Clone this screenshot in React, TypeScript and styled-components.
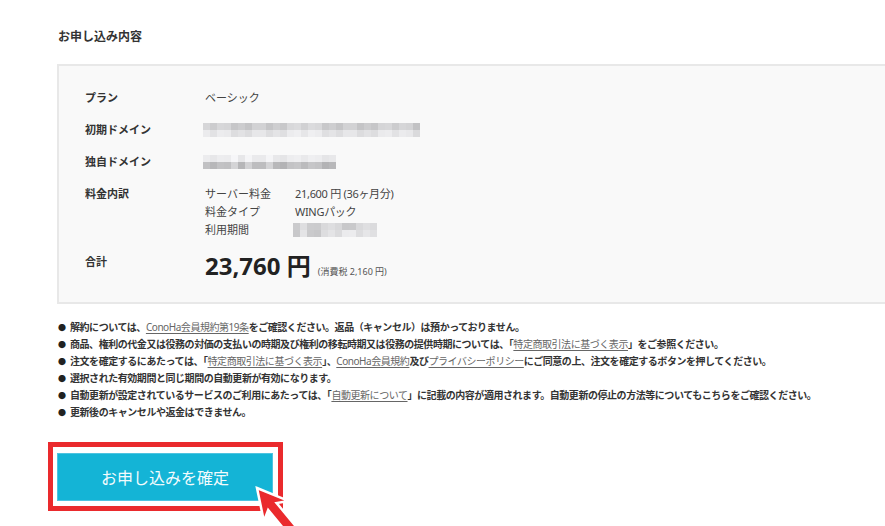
import styled, { createGlobalStyle } from 'styled-components'

const GlobalStyle = createGlobalStyle`
  html {
    overflow: hidden;
  }
  body {
    margin: 0;
    padding: 0;
    min-height: 100vh;
    background: #fff;
    font-family: "Noto Sans", "Noto Sans CJK JP", sans-serif;
    color: #333;
  }
`;

// blurred (pixelated) placeholder for hidden values
function cellShade(seed: number, i: number, lo: number, hi: number) {
  const n = ((i * 7919 + seed * 104729 + i * i * 31) % 101) / 101;
  const v = Math.round(lo + (hi - lo) * n);
  return `rgb(${v},${v},${v + 2})`;
}

function Mosaic({ seed, cols, rows }: { seed: number; cols: number; rows: [number, number][] }) {
  return (
    <MosaicGrid $cols={cols} $rows={rows.length}>
      {rows.map(([lo, hi], r) =>
        Array.from({ length: cols }).map((_, c) => (
          <MosaicCell key={`${r}-${c}`} $shade={cellShade(seed + r * 13, c, lo, hi)} />
        ))
      )}
    </MosaicGrid>
  );
}

function getNotes() {
  return [
    <>解約については、<NoteLink>ConoHa会員規約第19条</NoteLink>をご確認ください。返品（キャンセル）は預かっておりません。</>,
    <>商品、権利の代金又は役務の対価の支払いの時期及び権利の移転時期又は役務の提供時期については、「<NoteLink>特定商取引法に基づく表示</NoteLink>」をご参照ください。</>,
    <>注文を確定するにあたっては、「<NoteLink>特定商取引法に基づく表示</NoteLink>」、<NoteLink>ConoHa会員規約</NoteLink>及び<NoteLink>プライバシーポリシー</NoteLink>にご同意の上、注文を確定するボタンを押してください。</>,
    <>選択された有効期間と同じ期間の自動更新が有効になります。</>,
    <>自動更新が設定されているサービスのご利用にあたっては、「<NoteLink>自動更新について</NoteLink>」に記載の内容が適用されます。自動更新の停止の方法等についてもこちらをご確認ください。</>,
    <>更新後のキャンセルや返金はできません。</>,
  ];
}

function App() {
  return (
    <Page>
      <GlobalStyle />
      <Title>お申し込み内容</Title>
      <Panel>
        <Row>
          <Label>プラン</Label>
          <Value>ベーシック</Value>
        </Row>
        <Row>
          <Label>初期ドメイン</Label>
          <Value>
            <Mosaic seed={3} cols={31} rows={[[188, 222], [214, 242]]} />
          </Value>
        </Row>
        <Row>
          <Label>独自ドメイン</Label>
          <Value>
            <Mosaic seed={7} cols={19} rows={[[228, 246], [178, 214]]} />
          </Value>
        </Row>
        <Row>
          <Label>料金内訳</Label>
          <Breakdown>
            <SubLabel>サーバー料金</SubLabel>
            <SubValue>21,600 円 (36ヶ月分)</SubValue>
            <SubLabel>料金タイプ</SubLabel>
            <SubValue>WINGパック</SubValue>
            <SubLabel>利用期間</SubLabel>
            <SubValue>
              <Mosaic seed={11} cols={12} rows={[[200, 226], [196, 236]]} />
            </SubValue>
          </Breakdown>
        </Row>
        <Row>
          <Label>合計</Label>
          <Total>
            <TotalAmount>23,760 円</TotalAmount>
            <Tax>(消費税 2,160 円)</Tax>
          </Total>
        </Row>
      </Panel>

      <Notes>
        {getNotes().map((n, i) => (
          <Note key={i}>
            <Bullet>●</Bullet>
            <span>{n}</span>
          </Note>
        ))}
      </Notes>

      <Highlight>
        <ConfirmButton>お申し込みを確定</ConfirmButton>
        <Arrow width="60" height="43" viewBox="-4 -4 60 43">
          <polygon
            points="0,0 31.5,12.9 19.6,15 46,47 37.6,54 11.2,22 6.9,33.3"
            fill="#ea2a2d"
            stroke="#fff"
            strokeWidth="2.5"
            strokeLinejoin="miter"
          />
        </Arrow>
      </Highlight>
    </Page>
  )
}

const Page = styled.div`
  padding: 28px 0 0 57px;
`;

const Title = styled.div`
  font-size: 12px;
  line-height: 18px;
  font-weight: 700;
  color: #333;
  margin-left: 1px;
  margin-bottom: 18px;
`;

const Panel = styled.div`
  background: #f9f9f9;
  border: 2px solid #e8e8e8;
  border-right: none;
  margin-right: -20px;
  padding: 23px 0 17px 26px;
  display: flex;
  flex-direction: column;
  gap: 14px;
`;

const Row = styled.div`
  display: flex;
  align-items: flex-start;
`;

const Label = styled.div`
  width: 120px;
  font-size: 11px;
  line-height: 18px;
  font-weight: 700;
  color: #333;
`;

const Value = styled.div`
  font-size: 11px;
  line-height: 18px;
  color: #444;
  min-height: 18px;
  display: flex;
  align-items: center;
`;

const Breakdown = styled.div`
  display: grid;
  grid-template-columns: 90px auto;
  grid-auto-rows: 18px;
  font-size: 11px;
  line-height: 18px;
  color: #444;
`;

const SubLabel = styled.div``;

const SubValue = styled.div`
  display: flex;
  align-items: center;
  letter-spacing: -0.3px;
`;

const MosaicGrid = styled.div<{ $cols: number; $rows: number }>`
  display: grid;
  grid-template-columns: repeat(${p => p.$cols}, 7px);
  grid-template-rows: repeat(${p => p.$rows}, 7px);
  margin-left: -2px;
`;

const MosaicCell = styled.div<{ $shade: string }>`
  background: ${p => p.$shade};
`;

const Total = styled.div`
  display: flex;
  align-items: baseline;
  gap: 7px;
  line-height: 26px;
`;

const TotalAmount = styled.div`
  font-size: 24px;
  font-weight: 700;
  color: #222;
`;

const Tax = styled.div`
  font-size: 9px;
  color: #555;
`;

const Notes = styled.ul`
  list-style: none;
  margin: 15px 0 0 1px;
  padding: 0;
`;

const Note = styled.li`
  display: flex;
  gap: 4px;
  font-size: 10px;
  line-height: 17px;
  font-weight: 700;
  letter-spacing: -0.45px;
  color: #333;
  white-space: nowrap;
`;

const Bullet = styled.span`
  font-size: 8px;
  width: 8px;
  color: #222;
`;

const NoteLink = styled.a`
  color: #666;
  font-weight: 400;
  text-decoration: underline;
  text-underline-offset: 2px;
`;

const Highlight = styled.div`
  position: relative;
  display: inline-block;
  margin: 21px 0 0 -9px;
  border: 5px solid #ea2a2d;
  padding: 6px 5px 5px 4px;
`;

const ConfirmButton = styled.button`
  display: block;
  width: 216px;
  height: 48px;
  border: 1px solid #4ec3e0;
  background: #14b4d6;
  color: #f2fbfd;
  font-family: "Noto Sans CJK JP", sans-serif;
  font-size: 16px;
  cursor: pointer;
`;

const Arrow = styled.svg`
  position: absolute;
  left: 200px;
  top: 37px;
  overflow: visible;
`;

export default App
